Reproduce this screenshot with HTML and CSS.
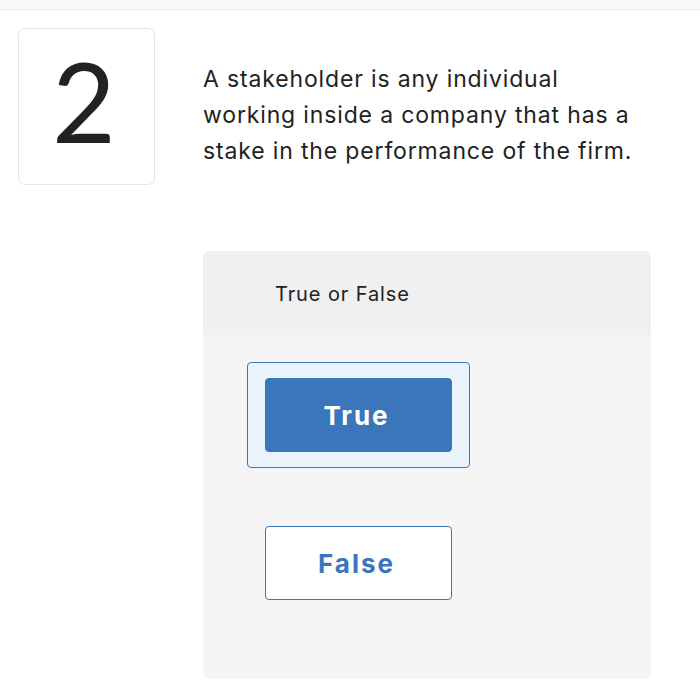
FILE: index.html
```html
<!DOCTYPE html>
<html lang="en">
<head>
    <meta charset="UTF-8">
    <meta name="viewport" content="width=device-width, initial-scale=1.0">
    <title>Question 2</title>
    <link rel="stylesheet" href="styles.css">
</head>
<body>
    <div class="topbar"></div>
    <div class="question">
        <div class="number-box">2</div>
        <p class="prompt">A stakeholder is any individual working inside a company that has a stake in the performance of the firm.</p>
    </div>

    <div class="answer-panel">
        <div class="panel-header">True or False</div>
        <div class="panel-body">
            <div class="choice selected">
                <button class="choice-btn">True</button>
            </div>
            <div class="choice">
                <button class="choice-btn">False</button>
            </div>
        </div>
    </div>
</body>
</html>
```

FILE: styles.css
```css
body {
    margin: 0;
    font-family: Inter, "Open Sans", sans-serif;
    color: #222;
    background: #fff;
}
.topbar {
    height: 9px;
    background: #fafafa;
    border-bottom: 1px solid #ececec;
}
.question {
    display: flex;
    padding: 18px 0 0 18px;
}
.number-box {
    width: 137px;
    height: 157px;
    box-sizing: border-box;
    padding: 0 5px 14px 0;
    border: 1px solid #e6e6e6;
    border-radius: 7px;
    display: flex;
    align-items: center;
    justify-content: center;
    font-family: Lato, sans-serif;
    font-size: 110px;
    font-weight: 400;
    color: #222;
    flex-shrink: 0;
}
.prompt {
    margin: 33px 0 0 48px;
    width: 445px;
    font-size: 23px;
    line-height: 36px;
    letter-spacing: 0.85px;
}
.answer-panel {
    margin: 66px 0 0 203px;
    width: 448px;
    height: 428px;
    border-radius: 6px;
    overflow: hidden;
    background: #f5f5f6;
}
.panel-header {
    height: 84px;
    background: #f0f0f0;
    padding-left: 72px;
    line-height: 86px;
    font-size: 20px;
    letter-spacing: 0.9px;
}
.panel-body {
    padding: 27px 0 0 44px;
    display: flex;
    flex-direction: column;
    gap: 42px;
}
.choice {
    width: 187px;
    padding: 15px 17px;
    border: 1px solid transparent;
}
.choice.selected {
    background: #eaf2fb;
    border-color: #3b78bb;
    border-radius: 4px;
}
.choice-btn {
    display: block;
    width: 100%;
    height: 74px;
    padding-left: 2px;
    font-family: inherit;
    font-size: 26px;
    font-weight: 700;
    letter-spacing: 2px;
    color: #3b76bb;
    background: #fff;
    border: 1.5px solid #3b76bb;
    border-radius: 4px;
}
.choice.selected .choice-btn {
    background: #3b76bb;
    color: #fff;
}
```
